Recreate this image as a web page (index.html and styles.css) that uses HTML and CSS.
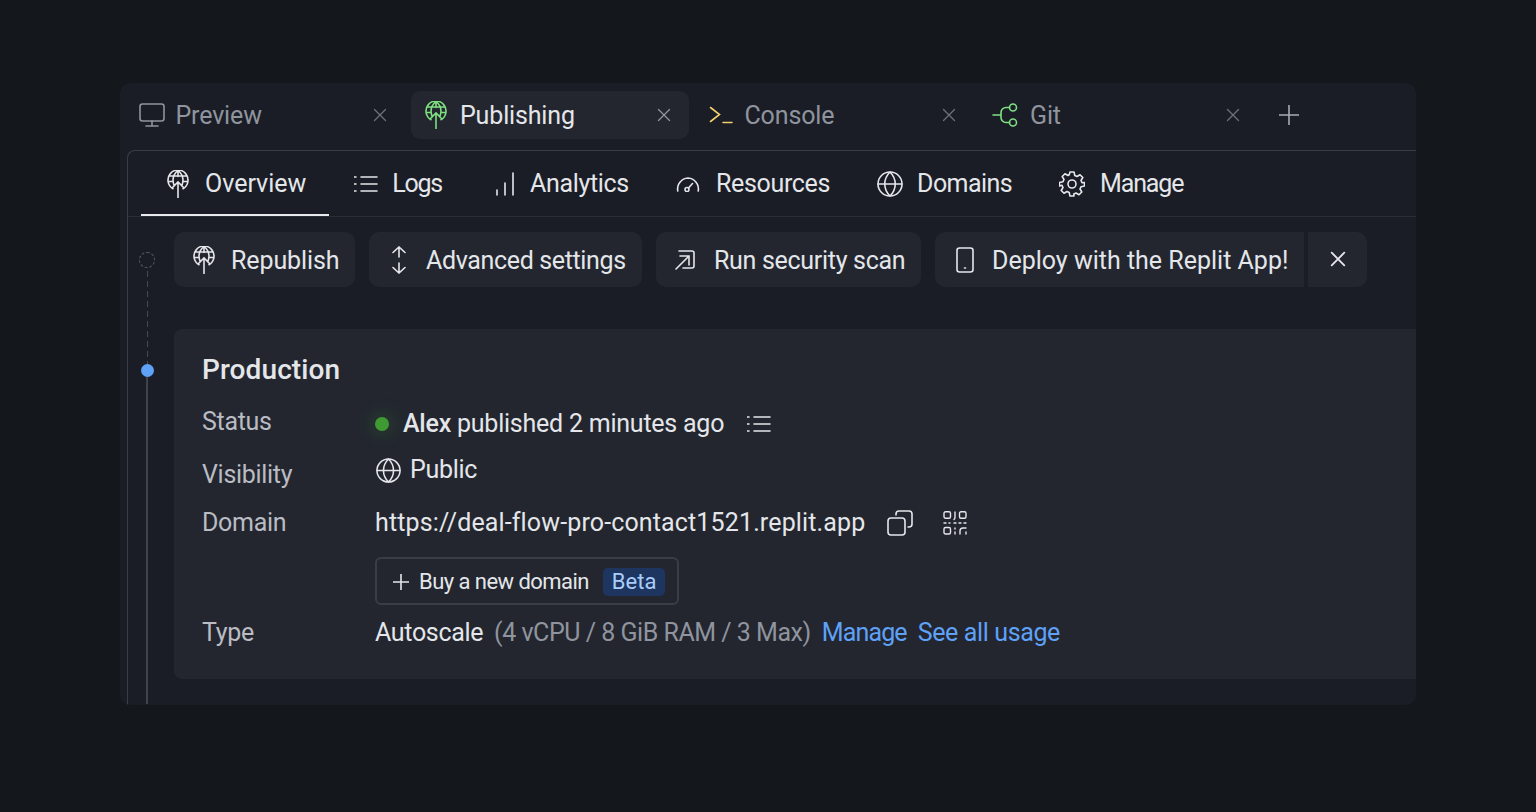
FILE: index.html
```html
<!DOCTYPE html>
<html lang="en">
<head>
<meta charset="utf-8">
<title>Publishing</title>
<link rel="stylesheet" href="styles.css">
</head>
<body>
<svg class="defs" width="0" height="0" aria-hidden="true">
  <defs>
    <symbol id="pub" viewBox="0 0 24 28">
      <path d="M7 18.700A10 10 0 1 1 17 18.700M2.800 6h18.400M2 11.500h4.500M17.500 11.500H22M12 .5C9 3 7 6.500 7 10c0 1.800.3 3 .8 4.500M12 .5c3 2.500 5 6 5 9.500 0 1.800-.3 3-.8 4.500M12 .5v6M12 12v15.500M6 18l6-6 6 6"/>
    </symbol>
    <symbol id="globe" viewBox="0 0 26 26">
      <circle cx="13" cy="13" r="12"/><path d="M1 13h24M13 1c-7 7-7 17 0 24M13 1c7 7 7 17 0 24"/>
    </symbol>
    <symbol id="x" viewBox="0 0 14 14"><path d="M1.500 1.500l11 11M12.500 1.500l-11 11"/></symbol>
    <symbol id="list" viewBox="0 0 24 18"><path d="M7 2h16M7 9h16M7 16h16M.5 2h1.500M.5 9h1.500M.5 16h1.500"/></symbol>
  </defs>
</svg>
<main class="panel">
  <header class="tabs">
    <div class="tab tab-muted">
      <svg class="ic ic-monitor" viewBox="0 0 26 24"><rect x="1" y="1" width="24" height="17" rx="2.500"/><path d="M13 18v5M7 23h12"/></svg>
      <span class="tab-label">Preview</span>
      <svg class="ic close"><use href="#x"/></svg>
    </div>
    <div class="tab tab-active">
      <svg class="ic ic-pub green"><use href="#pub"/></svg>
      <span class="tab-label">Publishing</span>
      <svg class="ic close"><use href="#x"/></svg>
    </div>
    <div class="tab tab-muted">
      <svg class="ic ic-term" viewBox="0 0 24 18"><path d="M1.500 1.500l9 7-9 7M14 16.500h9"/></svg>
      <span class="tab-label">Console</span>
      <svg class="ic close"><use href="#x"/></svg>
    </div>
    <div class="tab tab-muted">
      <svg class="ic ic-git green" viewBox="0 0 26 24"><circle cx="21" cy="4.500" r="3.500"/><circle cx="21" cy="19.500" r="3.500"/><path d="M1 12h8M17.500 4.500H14a5 5 0 0 0-5 5v5a5 5 0 0 0 5 5h3.500"/></svg>
      <span class="tab-label">Git</span>
      <svg class="ic close"><use href="#x"/></svg>
    </div>
    <svg class="ic add" viewBox="0 0 20 20"><path d="M10 0v20M0 10h20"/></svg>
  </header>

  <section class="pane">
    <nav class="nav">
      <a class="nav-item nav-current"><svg class="ic ic-pub"><use href="#pub"/></svg><span>Overview</span></a>
      <a class="nav-item"><svg class="ic ic-list"><use href="#list"/></svg><span class="t-logs">Logs</span></a>
      <a class="nav-item"><svg class="ic ic-bars" viewBox="0 0 18 24"><path d="M1 23v-5M9 23V11M17 23V1"/></svg><span class="t-analytics">Analytics</span></a>
      <a class="nav-item"><svg class="ic ic-gauge" viewBox="0 0 24 15"><path d="M1.800 14A11 11 0 0 1 12 1a11 11 0 0 1 10.200 13"/><circle cx="11" cy="12.500" r="2"/><path d="M12.500 11l4-4.500"/></svg><span class="t-resources">Resources</span></a>
      <a class="nav-item"><svg class="ic ic-globe ic-nudge"><use href="#globe"/></svg><span class="t-domains">Domains</span></a>
      <a class="nav-item"><svg class="ic ic-gear ic-nudge-left" viewBox="0 0 26 26"><circle cx="13" cy="13" r="4"/><path d="M11 1h4l.8 3.500 2.200 1 3-1.800 2.800 2.800-1.800 3 1 2.200L25.500 11.500v3.500l-3.500.800-1 2.200 1.800 3-2.800 2.800-3-1.800-2.200 1L15 25h-4l-.8-3.500-2.200-1-3 1.800-2.800-2.800 1.800-3-1-2.200L.5 15v-3.500L4 10.700l1-2.200-1.800-3L6 2.700l3 1.800 1.200-.7z" stroke-linejoin="round"/></svg><span class="t-manage">Manage</span></a>
    </nav>
    <div class="body">
      <div class="rail">
        <span class="rail-ring"></span>
        <span class="rail-dash"></span>
        <span class="rail-dot"></span>
        <span class="rail-line"></span>
      </div>
      <div class="content">
        <div class="actions">
          <button class="btn btn-republish"><svg class="ic ic-pub"><use href="#pub"/></svg><span class="t-republish">Republish</span></button>
          <button class="btn btn-advanced"><svg class="ic ic-updown" viewBox="0 0 16 28"><path d="M8 1v10M2 6.500L8 1l6 5.500M8 17v10M2 21.500L8 27l6-5.500"/></svg><span class="t-advanced">Advanced settings</span></button>
          <button class="btn btn-scan"><svg class="ic ic-scan" viewBox="0 0 20 20"><path d="M4 1h13a2 2 0 0 1 2 2v13a2 2 0 0 1-2 2H8M1 19L14 6M5 6h9v9"/></svg><span class="t-scan">Run security scan</span></button>
          <button class="btn btn-deploy"><svg class="ic ic-phone" viewBox="0 0 18 26"><rect x="1" y="1" width="16" height="24" rx="2.500"/><path d="M8.500 21h1"/></svg><span>Deploy with the Replit App!</span></button>
          <button class="btn btn-dismiss" aria-label="Dismiss"><svg class="ic ic-x"><use href="#x"/></svg></button>
        </div>
        <article class="card">
          <h2 class="card-title">Production</h2>
          <div class="row row-status">
            <div class="label">Status</div>
            <div class="value value-status">
              <span class="status-dot"></span>
              <span class="t-status"><b class="author">Alex</b> published 2 minutes ago</span>
              <svg class="ic ic-list ic-list-sm"><use href="#list"/></svg>
            </div>
          </div>
          <div class="row row-visibility">
            <div class="label label-visibility">Visibility</div>
            <div class="value value-public"><svg class="ic ic-globe-sm"><use href="#globe"/></svg><span class="t-public">Public</span></div>
          </div>
          <div class="row row-domain">
            <div class="label">Domain</div>
            <div class="value">
              <div class="url-line">
                <span class="url">https://deal-flow-pro-contact1521.replit.app</span>
                <svg class="ic ic-copy" viewBox="0 0 26 26"><path d="M9 5V4a3 3 0 0 1 3-3h10a3 3 0 0 1 3 3v10a3 3 0 0 1-3 3h-1"/><rect x="1" y="8" width="17" height="17" rx="3"/></svg>
                <svg class="ic ic-qr" viewBox="0 0 24 24"><rect x="1" y=".8" width="6.500" height="6.500" rx="1.500"/><rect x="16.500" y=".8" width="6.500" height="6.500" rx="1.500"/><rect x="1" y="16.500" width="6.500" height="6.500" rx="1.500"/><path d="M12 1v5a3 3 0 0 1-1 2.500M1 12h2M6 12h1M11 12h2M16 12h2M21 12h2M12 17v1M12 21v2M23 23v-2M17 23v-3a3 3 0 0 1 3-3h3"/></svg>
              </div>
              <button class="buy"><svg class="ic ic-plus" viewBox="0 0 16 16"><path d="M8 0v16M0 8h16"/></svg><span class="buy-text">Buy a new domain</span><span class="beta">Beta</span></button>
            </div>
          </div>
          <div class="row row-type">
            <div class="label">Type</div>
            <div class="value value-type">
              <span class="t-autoscale">Autoscale</span>
              <span class="specs">(4 vCPU / 8 GiB RAM / 3 Max)</span>
              <a class="link t-link-manage">Manage</a>
              <a class="link t-link-usage">See all usage</a>
            </div>
          </div>
        </article>
      </div>
    </div>
  </section>
</main>
</body>
</html>
```
FILE: styles.css
```css
* { box-sizing: border-box; }
html, body { margin: 0; height: 100%; }
body {
  background: #14171c;
  color: #e4e6ea;
  font-family: Roboto, "Liberation Sans", sans-serif;
  font-size: 25px;
  line-height: 30px;
  padding: 83px 120px 107px;
  overflow: hidden;
}
.defs { position: absolute; }
.ic { display: block; flex: none; fill: none; stroke: currentColor; stroke-width: 1.6; stroke-linecap: round; }
.panel {
  height: 622px;
  background: #1a1d25;
  border-radius: 10px;
  overflow: hidden;
  padding: 8px 0 0 7px;
}
.tabs { display: flex; align-items: center; gap: 6.500px; height: 48px; margin: 0 0 11px -0.500px; }
.tab { display: flex; align-items: center; width: 278px; height: 48px; padding: 0 18px 0 12px; border-radius: 9px; }
.tab-active { background: #23262f; padding-left: 13px; }
.tab-label { flex: 1; margin-left: 12px; padding-top: 2px; letter-spacing: -0.150px; }
.tab-muted { color: #8f949e; }
.close { width: 14px; height: 14px; color: #6d717a; stroke-width: 1.300; }
.tab-active .close { color: #8f949e; }
.green { color: #7ee081; }
.ic-pub { width: 24px; height: 28px; }
.ic-monitor { width: 26px; height: 24px; margin-right: -1px; }
.ic-term { width: 24px; height: 18px; color: #f0cf6e; margin-left: 1px; }
.ic-git { width: 26px; height: 24px; }
.add { width: 20px; height: 20px; margin-left: 14px; color: #a8acb4; }
.pane {
  height: 555px;
  border: 1px solid #3a3d46;
  border-width: 1px 0 0 1px;
  border-radius: 8px 0 0 0;
}
.nav { display: flex; height: 66px; border-bottom: 1px solid #2b2e37; padding-left: 13px; }
.nav-item { display: flex; align-items: center; gap: 15px; height: 65px; padding: 1px 23px 0 25px; color: #e4e6ea; }
.nav-current { box-shadow: inset 0 -2px 0 #e8eaed; }
.ic-list { width: 24px; height: 18px; }
.ic-bars { width: 18px; height: 24px; margin: 0 1px 0 7px; }
.ic-gauge { width: 24px; height: 15px; margin-left: -1px; margin-right: 1px; }
.ic-globe { width: 26px; height: 26px; }
.ic-globe-sm { width: 25px; height: 25px; margin-left: 1px; }
.ic-gear { width: 26px; height: 26px; }
.ic-nudge { margin-left: -1px; margin-right: -1px; }
.ic-nudge-left { margin-left: -1px; }
.t-logs { letter-spacing: -1.250px; margin: 0 -1px; }
.t-analytics { letter-spacing: -0.330px; }
.t-resources { letter-spacing: -0.330px; }
.t-domains { letter-spacing: -0.570px; }
.t-manage { letter-spacing: -1.150px; }
.body { display: flex; height: 487px; }
.rail { width: 46px; display: flex; flex-direction: column; align-items: center; padding: 35px 8px 0 0; flex: none; }
.rail-ring { width: 16px; height: 16px; border: 1.500px dashed #5a5e68; border-radius: 50%; flex: none; }
.rail-dash {
  width: 1px; height: 93px; margin-top: 3px; flex: none;
  background: repeating-linear-gradient(to bottom, #454952 0 6px, transparent 6px 10px);
}
.rail-dot { width: 13px; height: 13px; border-radius: 50%; background: #5ea1f7; flex: none; }
.rail-line { flex: 1; width: 1.500px; background: #3f434c; }
.content { flex: 1; min-width: 0; padding-top: 15px; }
.actions { display: flex; gap: 14px; height: 55px; margin-bottom: 42px; }
.btn {
  display: flex; align-items: center; gap: 15px;
  height: 55px; padding: 2px 18px 0;
  font: inherit; color: #e4e6ea;
  background: #23262f; border: 0; border-radius: 10px;
  white-space: nowrap; flex: none;
}
.btn .ic { margin-top: -2px; }
.btn-republish { width: 181px; }
.btn-advanced { width: 273px; }
.btn-scan { width: 265px; }
.btn-deploy { width: 369px; border-radius: 10px 0 0 10px; }
.btn-dismiss { width: 59px; margin-left: -10px; border-radius: 0 10px 10px 0; justify-content: center; padding: 0; }
.btn .ic-updown { width: 16px; height: 28px; margin-left: 4px; margin-right: 4px; }
.btn .ic-scan { width: 20px; height: 20px; margin-left: 1px; margin-right: 4px; }
.btn .ic-phone { width: 18px; height: 26px; margin-left: 3px; margin-right: 3px; }
.ic-x { width: 16px; height: 16px; }
.t-republish { letter-spacing: -0.100px; }
.t-advanced { letter-spacing: -0.350px; }
.t-scan { letter-spacing: -0.300px; }
.card { background: #23262f; border-radius: 8px 0 0 8px; height: 350px; padding: 24px 28px 0; }
.card-title { margin: 0 0 20px; font-size: 28px; line-height: 34px; font-weight: 500; letter-spacing: .1px; }
.row { display: grid; grid-template-columns: 173px 1fr; }
.row-status { height: 48px; }
.row-visibility { height: 53px; }
.row-domain { height: 110px; }
.label { color: #b9bcc3; letter-spacing: -0.300px; }
.label-visibility { padding-top: 5px; }
.value-status { display: flex; align-items: center; height: 30px; margin-top: 2px; }
.status-dot { width: 14px; height: 14px; border-radius: 50%; background: #3f9a33; margin-right: 14px; box-shadow: 0 0 16px 6px rgba(63,154,51,.16); }
.author { font-weight: 500; }
.t-status { letter-spacing: -0.230px; }
.ic-list-sm { width: 24px; height: 18px; margin-left: 23px; }
.value-public { display: flex; align-items: center; gap: 9px; height: 30px; }
.t-public { letter-spacing: -0.300px; }
.url-line { display: flex; align-items: center; height: 30px; }
.url { letter-spacing: 0.140px; }
.ic-copy { width: 26px; height: 26px; margin-left: 22px; }
.ic-qr { width: 24px; height: 24px; margin-left: 30px; stroke-width: 1.400; }
.buy {
  display: flex; align-items: center; gap: 10px;
  width: 304px; height: 48px; margin-top: 19px; padding: 1px 16px 0;
  font: inherit; font-size: 22px; color: #e4e6ea;
  background: transparent; border: 2px solid #3a3d46; border-radius: 6px;
  white-space: nowrap;
}
.buy-text { letter-spacing: -0.550px; }
.ic-plus { width: 16px; height: 16px; }
.beta { padding: 0 9px; margin-left: 4px; height: 28px; line-height: 28px; background: #1e3560; color: #a9cdfb; border-radius: 5px; }
.value-type { display: flex; align-items: center; height: 30px; }
.t-autoscale { letter-spacing: -0.330px; }
.specs { color: #8f949e; margin: 0 11px; letter-spacing: -0.480px; }
.link { color: #5ea1f7; margin-right: 11px; }
.t-link-manage { letter-spacing: -0.850px; }
.t-link-usage { letter-spacing: -0.380px; }
```
